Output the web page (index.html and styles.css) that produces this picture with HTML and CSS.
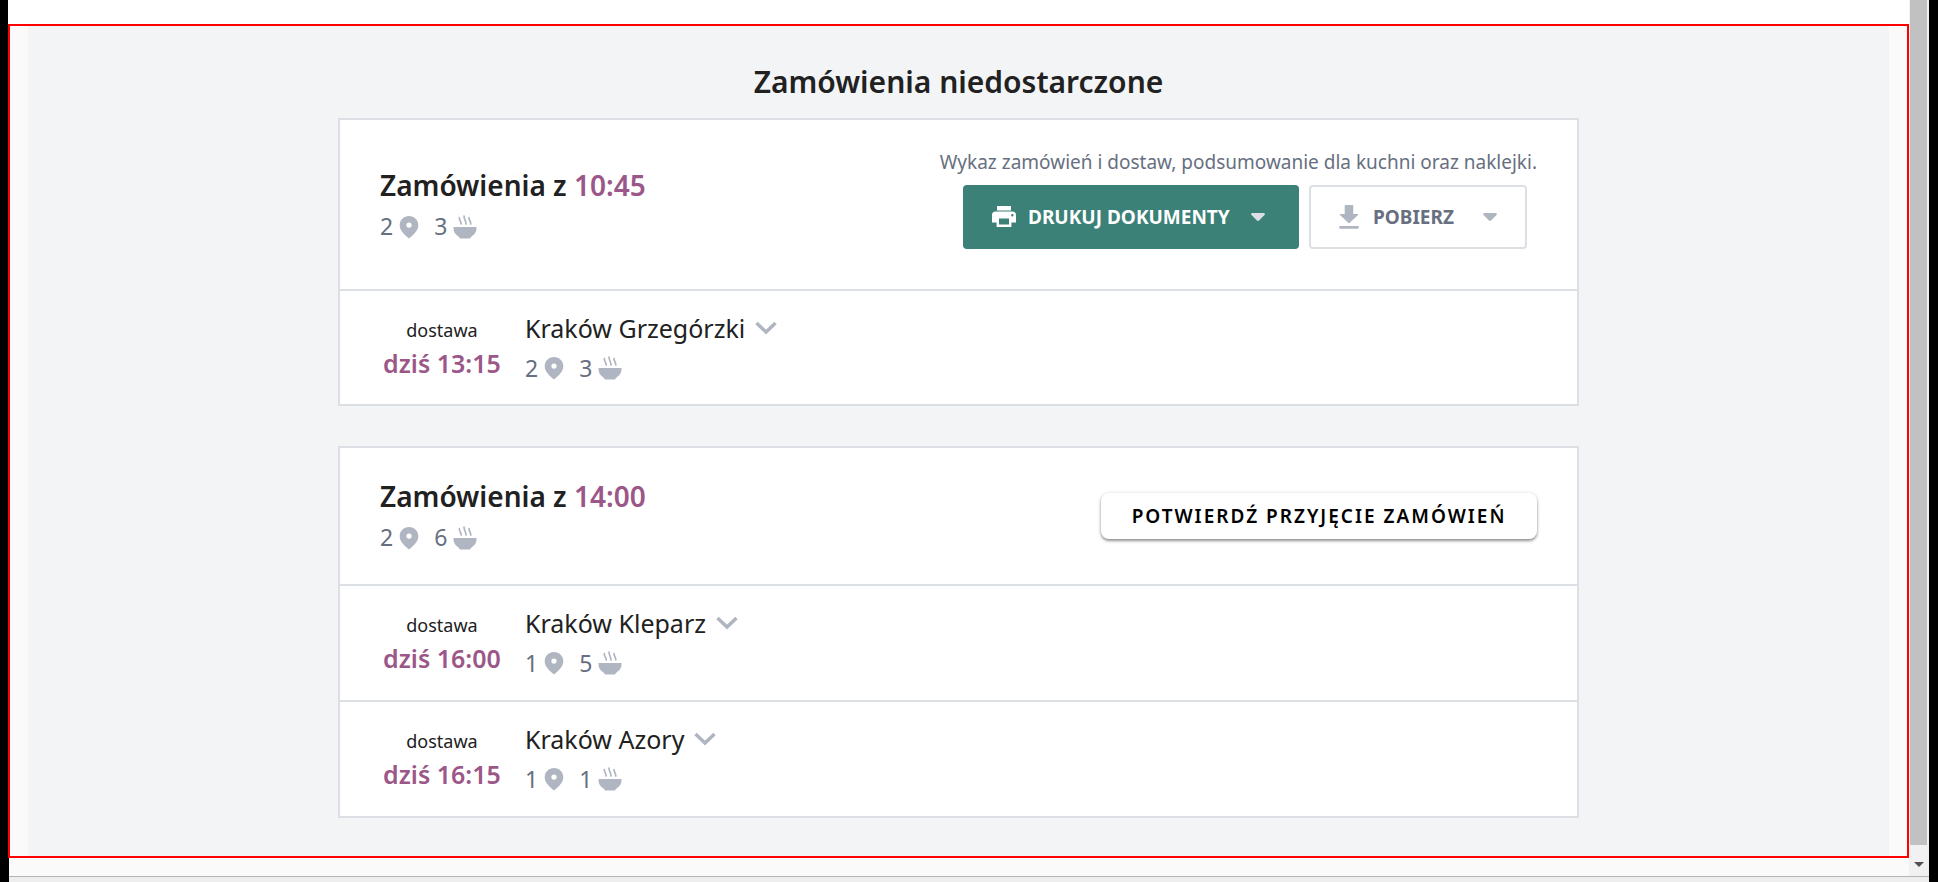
FILE: index.html
```html
<!DOCTYPE html>
<html lang="pl">
<head>
<meta charset="utf-8">
<title>Zamówienia niedostarczone</title>
<link rel="stylesheet" href="styles.css">
</head>
<body>
<svg class="sprite" aria-hidden="true">
  <symbol id="pin" viewBox="0 0 20 24"><path fill-rule="evenodd" d="M10 1C4.700 1 .7 5 .7 10.200c0 5.400 4.500 9 9.300 13.300 4.800-4.300 9.300-7.900 9.300-13.300C19.300 5 15.300 1 10 1zm0 6.500a2.600 2.600 0 1 1 0 5.200 2.600 2.600 0 0 1 0-5.200z"/></symbol>
  <symbol id="bowl" viewBox="0 0 24 24"><path d="M.5 12h23v1.500c0 3.500-2 6-4.500 7.500l-1.500 1.800a1 1 0 0 1-1 .7h-9a1 1 0 0 1-1-.7L5 21C2.500 19.500.5 17 .5 13.500z"/><path d="M6.300 2.500c0 3 1.700 3.500 1.900 6.500M11 1c0 3.500 2 4.500 2 8M16 2.500c0 3 1.800 3.500 1.800 6.500" fill="none" stroke="currentColor" stroke-width="1.700" stroke-linecap="round"/></symbol>
  <symbol id="chevron" viewBox="0 0 24 16"><path d="M2.500 3 12 12l9.500-9" fill="none" stroke="currentColor" stroke-width="3.500"/></symbol>
  <symbol id="caret" viewBox="0 0 14 8"><path d="M1.500 0h11c1.200 0 1.700 1.200 1 2L8.300 7.300c-.8.800-1.800.8-2.600 0L.5 2C-.2 1.200.3 0 1.500 0z"/></symbol>
  <symbol id="print" viewBox="0 0 24 22"><path fill-rule="evenodd" d="M5 0h14v4.500H5zM3.600 5.600h16.800A3.600 3.600 0 0 1 24 9.200v7.200h-4.600V21H4.600v-4.600H0V9.200a3.600 3.600 0 0 1 3.600-3.600zM7 12.600v6h10v-6zM20.300 8a1.200 1.200 0 1 0 0 2.400 1.200 1.200 0 0 0 0-2.400z"/></symbol>
  <symbol id="download" viewBox="0 0 20 24"><path d="M6.500 0h7a.8.8 0 0 1 .8.800V9h4.400a.5.5 0 0 1 .3.900L10.500 18a.7.700 0 0 1-1 0L1 9.900a.5.500 0 0 1 .3-.9h4.400V.8a.8.800 0 0 1 .8-.8zM1.200 21h17.600c1.500 0 1.500 2.700 0 2.700H1.200c-1.500 0-1.500-2.700 0-2.700z"/></symbol>
</svg>
<div class="window">
  <div class="page">
    <main class="orders">
      <h1 class="title">Zamówienia niedostarczone</h1>

      <section class="card">
        <header class="card-head card-head-tall">
          <div>
            <h2 class="batch">Zamówienia z <span class="time">10:45</span></h2>
            <p class="counts">2 <svg class="pin"><use href="#pin"/></svg> <span class="meals">3</span> <svg class="bowl"><use href="#bowl"/></svg></p>
          </div>
          <div class="documents">
            <p class="hint">Wykaz zamówień i dostaw, podsumowanie dla kuchni oraz naklejki.</p>
            <div class="actions">
              <button class="btn btn-print" type="button"><svg class="print"><use href="#print"/></svg>DRUKUJ DOKUMENTY<svg class="caret"><use href="#caret"/></svg></button>
              <button class="btn btn-download" type="button"><svg class="download"><use href="#download"/></svg>POBIERZ<svg class="caret"><use href="#caret"/></svg></button>
            </div>
          </div>
        </header>
        <article class="delivery">
          <div class="when"><p class="label">dostawa</p><p class="due">dziś 13:15</p></div>
          <div>
            <button class="place" type="button">Kraków Grzegórzki<svg class="chevron"><use href="#chevron"/></svg></button>
            <p class="counts">2 <svg class="pin"><use href="#pin"/></svg> <span class="meals">3</span> <svg class="bowl"><use href="#bowl"/></svg></p>
          </div>
        </article>
      </section>

      <section class="card">
        <header class="card-head">
          <div>
            <h2 class="batch">Zamówienia z <span class="time">14:00</span></h2>
            <p class="counts">2 <svg class="pin"><use href="#pin"/></svg> <span class="meals">6</span> <svg class="bowl"><use href="#bowl"/></svg></p>
          </div>
          <button class="confirm" type="button">POTWIERDŹ PRZYJĘCIE ZAMÓWIEŃ</button>
        </header>
        <article class="delivery">
          <div class="when"><p class="label">dostawa</p><p class="due">dziś 16:00</p></div>
          <div>
            <button class="place" type="button">Kraków Kleparz<svg class="chevron"><use href="#chevron"/></svg></button>
            <p class="counts">1 <svg class="pin"><use href="#pin"/></svg> <span class="meals">5</span> <svg class="bowl"><use href="#bowl"/></svg></p>
          </div>
        </article>
        <article class="delivery">
          <div class="when"><p class="label">dostawa</p><p class="due">dziś 16:15</p></div>
          <div>
            <button class="place" type="button">Kraków Azory<svg class="chevron"><use href="#chevron"/></svg></button>
            <p class="counts">1 <svg class="pin"><use href="#pin"/></svg> <span class="meals">1</span> <svg class="bowl"><use href="#bowl"/></svg></p>
          </div>
        </article>
      </section>
    </main>
  </div>
  <div class="scrollbar"><div class="thumb"></div><svg class="arrow" viewBox="0 0 10 5"><path d="M0 0h10L5 5z"/></svg></div>
</div>
<div class="statusbar"></div>
</body>
</html>
```
FILE: styles.css
```css
* { box-sizing: border-box; }
body {
  margin: 0;
  min-height: 100vh;
  display: flex;
  flex-direction: column;
  padding: 0 9px;
  background: #000;
  color: #212121;
  font-family: "Noto Sans", sans-serif;
}
h1, h2, p { margin: 0; font-weight: 400; }
button { font-family: inherit; cursor: pointer; }
svg { fill: currentColor; flex: none; }
.sprite { position: absolute; width: 0; height: 0; }

.window { flex: 1; display: flex; background: #fafafa; }
.page { flex: 1; border-top: 24px solid #fff; padding-bottom: 18px; display: flex; margin-right: -1px; margin-left: -1px; z-index: 1; background: linear-gradient(#000, #000) left / 1px 100% no-repeat, #fafafa; }
.orders {
  flex: 1;
  border: 2px solid #f00;
  padding: 34px 18px 38px;
  background: #f3f4f6 padding-box;
  box-shadow: inset 18px 0 #fafafa, inset -18px 0 #fafafa;
}
.title { font-size: 30px; line-height: 44px; font-weight: 600; text-align: center; margin-bottom: 14px; }

.card { max-width: 1241px; margin: 0 auto 40px; border: 2px solid #dcdfe3; background: #fff; }
.card:last-child { margin-bottom: 0; }
.card-head { display: flex; justify-content: space-between; align-items: center; padding: 27px 40px; }
.card-head-tall { padding: 26px 40px 25px; }
.batch { font-size: 28px; line-height: 42px; font-weight: 600; }
.time, .due { color: #9c5789; }
.counts { display: flex; align-items: center; gap: 6px; font-size: 23px; line-height: 40px; color: #676f80; }
.counts svg { color: #b0b6c1; }
.card-head .pin, .card-head .bowl { margin-top: 2px; }
.pin { width: 20px; height: 24px; }
.bowl { width: 24px; height: 24px; }
.meals { margin-left: 9px; }

.documents { text-align: right; padding-bottom: 15px; }
.hint { font-size: 19px; line-height: 32px; color: #676f80; }
.actions { display: flex; justify-content: flex-end; gap: 10px; padding: 7px 10px 0 0; }
.btn { display: flex; align-items: center; height: 64px; border-radius: 4px; font-size: 19px; font-weight: 700; padding: 0 28px; }
.btn-print { width: 336px; border: 0; background: #3b8178; color: #fff; }
.btn-download { width: 218px; border: 2px solid #dcdfe3; background: #fff; color: #676f80; }
.caret { width: 14px; height: 8px; margin-left: auto; color: #b0b6c1; }
.btn-print .caret { margin-right: 6px; color: #dcdfe3; }
.print { width: 24px; height: 22px; margin: 0 12px 0 1px; }
.download { width: 20px; height: 24px; margin-right: 14px; color: #b0b6c1; }
.confirm { width: 436px; height: 46px; border: 0; border-radius: 8px; background: #fff; color: #000; font-size: 19px; font-weight: 600; letter-spacing: 2px; white-space: nowrap; box-shadow: 0 2px 3px rgba(0, 0, 0, .4), 0 0 4px rgba(0, 0, 0, .1); }

.delivery { display: grid; grid-template-columns: 124px 1fr; gap: 21px; padding: 17px 40px 16px; border-top: 2px solid #dcdfe3; }
.card-head-tall + .delivery { padding-bottom: 16px; }
.card-head:not(.card-head-tall) ~ .delivery { padding-bottom: 17px; }
.when { text-align: center; padding-top: 6px; white-space: nowrap; }
.label { font-size: 18px; line-height: 32px; }
.due { font-size: 25px; line-height: 34px; font-weight: 600; }
.place { display: flex; align-items: center; gap: 9px; padding: 0; border: 0; background: none; color: #212121; font-size: 25px; line-height: 40px; }
.chevron { width: 24px; height: 16px; color: #b0b6c1; }

.scrollbar { width: 21px; display: flex; flex-direction: column; align-items: center; background: #f1f1f1; padding-bottom: 9px; }
.thumb { width: 17px; flex: 1; background: #c1c1c1; margin-bottom: 17px; }
.arrow { width: 10px; height: 5px; fill: #505050; }
.statusbar { height: 6px; border-top: 1px solid #b5b5b5; background: #eee; }
```
